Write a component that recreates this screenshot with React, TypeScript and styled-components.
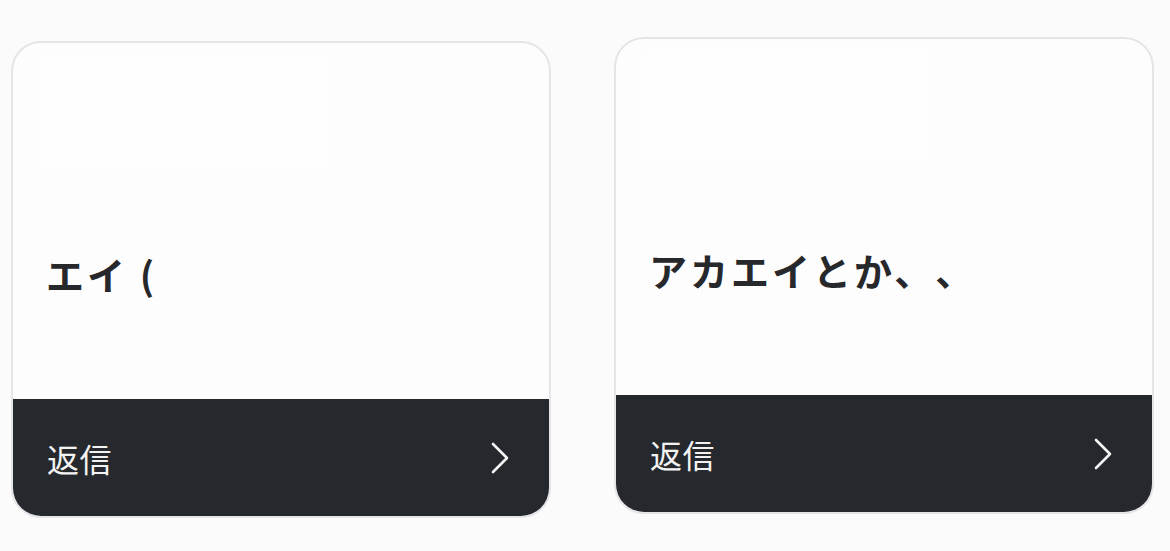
import styled, { createGlobalStyle } from 'styled-components';

const GlobalStyle = createGlobalStyle`
  html, body {
    margin: 0;
    padding: 0;
    background-color: #fbfbfb;
    font-family: "Noto Sans CJK JP", "Noto Sans", sans-serif;
  }
`;

const Row = styled.div`
  display: flex;
  align-items: flex-start;
  gap: 63px;
  padding-left: 11px;
`;

const Card = styled.div<{ $top: number }>`
  display: flex;
  flex-direction: column;
  width: 540px;
  height: 477px;
  margin-top: ${(p) => p.$top}px;
  box-sizing: border-box;
  border: 2px solid #e5e5e9;
  border-radius: 30px;
  background-color: #fdfdfd;
  overflow: hidden;
`;

const Body = styled.div`
  flex: 1;
  padding: 12px 0 0 33px;
`;

const Thumb = styled.div`
  width: 288px;
  height: 110px;
  margin-left: -6px;
  background-color: #fefefe;
`;

const Title = styled.div`
  margin-top: 83px;
  font-size: 38px;
  font-weight: 700;
  line-height: 52px;
  letter-spacing: 3px;
  color: #26282c;
  white-space: nowrap;
  text-spacing-trim: space-all;
`;

const Footer = styled.div`
  display: flex;
  align-items: center;
  justify-content: space-between;
  height: 117px;
  flex-shrink: 0;
  padding: 0 38px 0 34px;
  background-color: #25282c;
`;

const ReplyLabel = styled.span`
  font-size: 32px;
  font-weight: 400;
  color: #f2f2f2;
  letter-spacing: 0.5px;
`;

const Chevron = () => (
  <svg width="22" height="34" viewBox="0 0 22 34" fill="none">
    <path d="M4 3 L18 17 L4 31" stroke="#f4f4f4" strokeWidth="2.6" strokeLinecap="round" strokeLinejoin="round" />
  </svg>
);

type ReplyCardProps = {
  top: number;
  text: string;
};

const ReplyCard = ({ top, text }: ReplyCardProps) => (
  <Card $top={top}>
    <Body>
      <Thumb />
      <Title>{text}</Title>
    </Body>
    <Footer>
      <ReplyLabel>返信</ReplyLabel>
      <Chevron />
    </Footer>
  </Card>
);

export default function App() {
  return (
    <>
      <GlobalStyle />
      <Row>
        <ReplyCard top={41} text="エイ (" />
        <ReplyCard top={37} text="アカエイとか、、" />
      </Row>
    </>
  );
}
